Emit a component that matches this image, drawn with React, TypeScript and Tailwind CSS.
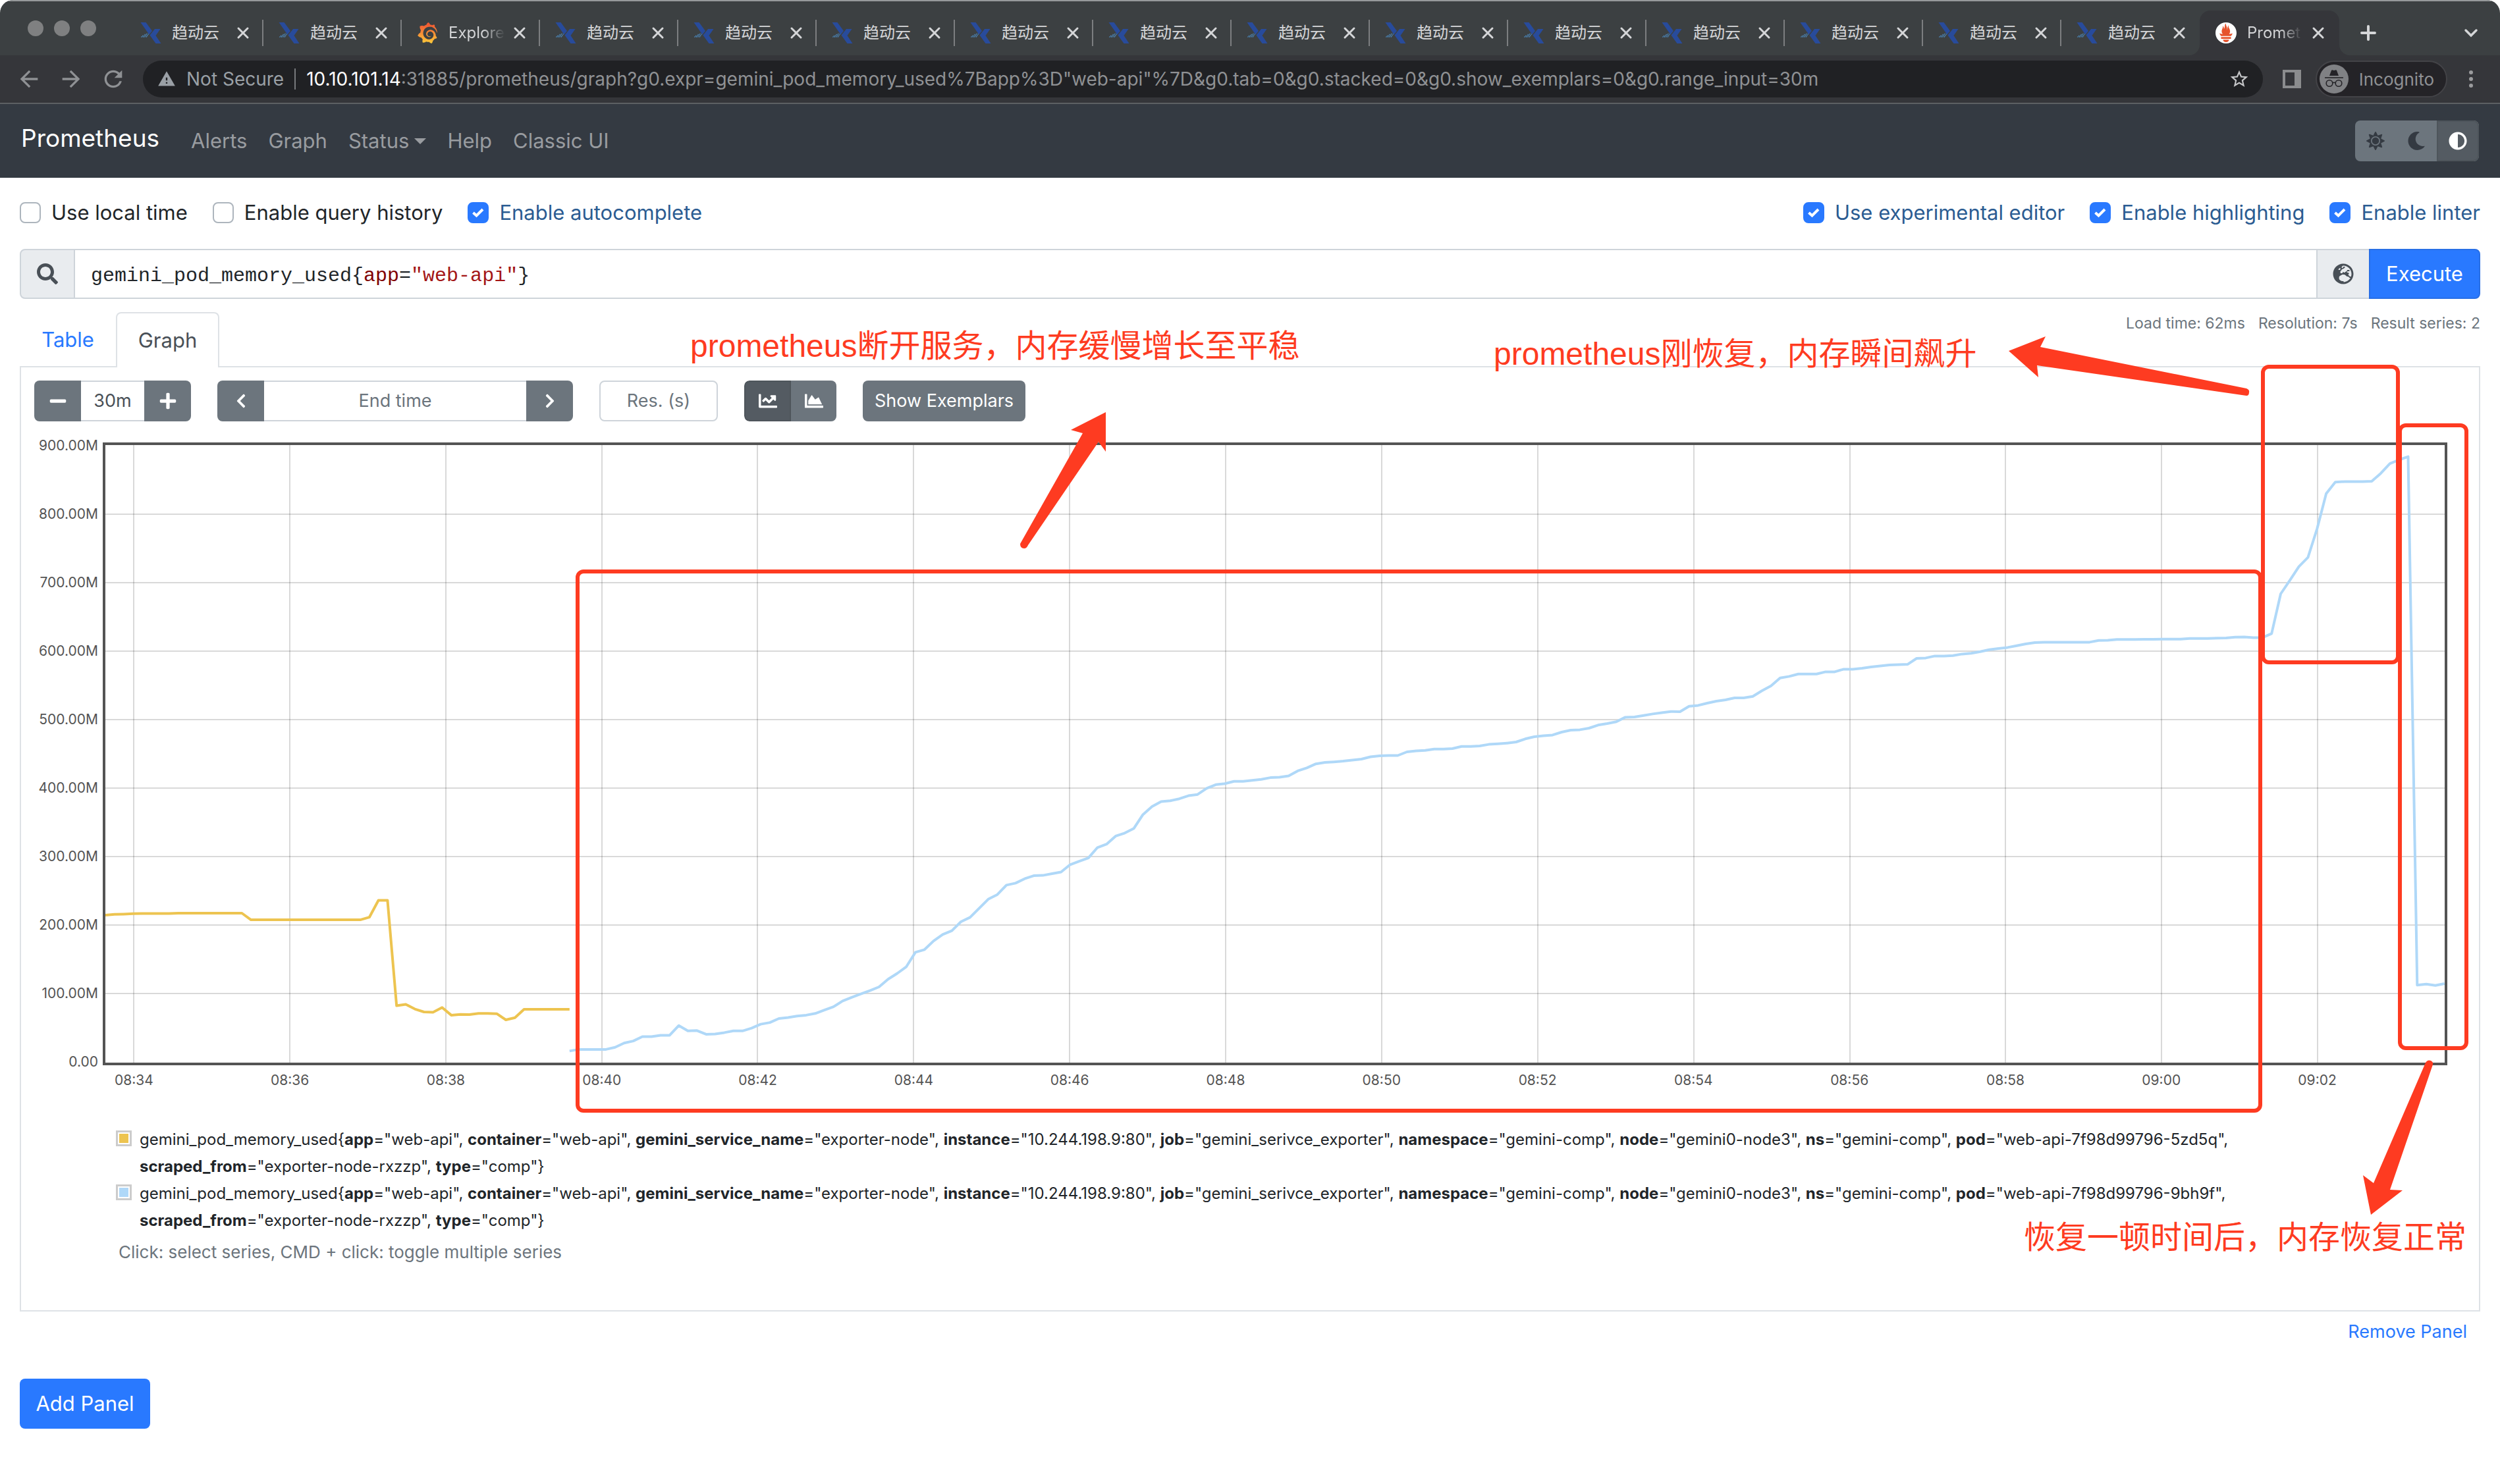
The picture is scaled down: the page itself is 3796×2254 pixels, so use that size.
import React from "react";
import {
  FaAdjust,
  FaChartArea,
  FaChartLine,
  FaChevronLeft,
  FaChevronRight,
  FaGlobeEurope,
  FaMinus,
  FaMoon,
  FaPlus,
  FaSearch,
  FaSun,
} from "react-icons/fa";
import { MdArrowBack, MdArrowForward, MdRefresh, MdStarBorder, MdWarning } from "react-icons/md";
import { SiGrafana, SiPrometheus } from "react-icons/si";

/* ---------- series data, in millions, one sample every 7 seconds ---------- */

const STEP = 13.82;
const PLOT_W = 3560;
const PLOT_H = 946;
const ZERO_Y = 941;

const rep = (value: number, times: number): number[] => Array.from({ length: times }, () => value);

const yellow: number[] = [
  214.5, 215.6, 216, 216.6, ...rep(216.9, 4), ...rep(217.3, 8), ...rep(207.6, 13), 211.3, 236.1, 236.1,
  82.1, 84.2, 77.3, 73.1, 72.6, 79.5, 68.4, 69.4, 69.2, 71, 71, 70.5, 61.5, 64.7, ...rep(76.8, 6),
];

const blue: number[] = [
  16, 18.4, 18.4, 18.4, 18.4, 21.4, 27.7, 30.7, 37, 37, 39, 39, 53.2, 45.4, 45.9, 40.5, 41, 42.9, 45.4, 45.4,
  49.3, 55.2, 57.6, 63.5, 65, 67, 68.4, 70.9, 75.8, 80.7, 89, 94.4, 99.3, 104.2, 109.6, 120.9, 129.3, 139.1,
  160.2, 164.1, 176.8, 186.2, 191.6, 204.8, 211.2, 224.4, 237.7, 244.5, 258.3, 261.2, 267.6, 272, 272.5, 275,
  277.4, 288.2, 293.1, 298, 313.2, 318.1, 329.9, 334.3, 341.2, 361.3, 373.1, 380.4, 381.4, 384.4, 388.8, 390.7,
  399.6, 405, 406.4, 409.9, 409.9, 411.3, 412.8, 415.3, 415.8, 417.7, 425.1, 429.5, 435.4, 437.4, 438.3, 439.3,
  440.8, 442.3, 445.7, 447.2, 447.7, 447.6, 452.9, 454.4, 455.1, 457, 457, 457.7, 460.9, 460.9, 461.5, 463.8,
  464.7, 465.7, 467.3, 471.8, 475, 476.3, 477.5, 481.7, 484.6, 485.2, 487.5, 492, 494.2, 496.8, 503.5, 503.8,
  506.1, 508.3, 510.2, 511.8, 511.5, 519.5, 520.8, 524, 526.9, 528.8, 531.7, 531.7, 533.9, 542, 549.3, 560.9,
  563.1, 566.6, 566.6, 566.6, 569.8, 569.8, 573.7, 573.7, 575, 576.9, 578.5, 579.8, 580.4, 580.7, 589.4, 590,
  592.9, 592.9, 593.6, 595.8, 596.8, 599.3, 602.2, 603.8, 605.4, 608, 610.6, 612.5, ...rep(613.1, 6), 615.7,
  616, ...rep(617, 3), 617.3, 617.3, ...rep(617.6, 3), ...rep(618.6, 3), 618.9, 619.2, 620.5, 620.8, 619.8,
  619.8, 625.6, 683.7, 703.2, 723.5, 736.9, 778.8, 830, 846.9, ...rep(847.6, 3), 848.2, 859.7, 873.9, 879.3,
  884, 112.3, 113.7, 111.7, 114.4,
];

const toPoints = (values: number[], start: number): string =>
  values.map((v, i) => `${(4 + STEP * (start + i)).toFixed(1)},${(ZERO_Y - v * 1.04).toFixed(1)}`).join(" ");

const yLabels = ["900.00M", "800.00M", "700.00M", "600.00M", "500.00M", "400.00M", "300.00M", "200.00M", "100.00M", "0.00"];
const xLabels = [
  "08:34", "08:36", "08:38", "08:40", "08:42", "08:44", "08:46", "08:48",
  "08:50", "08:52", "08:54", "08:56", "08:58", "09:00", "09:02",
];

/* ---------- browser chrome ---------- */

function CloudLogo() {
  return (
    <svg viewBox="0 0 32 32" className="size-8 shrink-0" aria-hidden="true">
      <polygon points="0.5,0 8.5,0 18,13 13.5,18.5" fill="#284b9b" />
      <polygon points="22,10 30.5,10 23.5,20 31.5,32 23.5,32 14.5,19.5" fill="#284b9b" />
      <g stroke="#4f93cf" strokeWidth="1.3" strokeDasharray="1.6 0.7">
        <path d="M1.5 22.5 L4 20" />
        <path d="M4 22.5 L7.5 18" />
        <path d="M6.5 22.5 L10.5 16.5" />
        <path d="M9 22.5 L12.5 17.5" />
      </g>
    </svg>
  );
}

function CloseIcon() {
  return (
    <svg viewBox="0 0 20 20" className="size-5" stroke="#d5d6d8" strokeWidth="3" strokeLinecap="round" aria-hidden="true">
      <path d="M3 3 L17 17 M17 3 L3 17" />
    </svg>
  );
}

function BrowserTab({ title, divider = true }: { title: string; divider?: boolean }) {
  const grafana = title === "Explore";
  return (
    <div className="flex h-[68px] w-[210px] min-w-0 items-center">
      <div className="flex min-w-0 flex-1 items-center pl-[23px]">
        {grafana ? <SiGrafana className="size-8 shrink-0" fill="url(#grafana-fill)" /> : <CloudLogo />}
        <span
          className={
            grafana
              ? "ml-4 w-[86px] overflow-hidden whitespace-nowrap bg-gradient-to-r from-[#d5d6d8] from-60% to-transparent bg-clip-text text-transparent"
              : "ml-4 w-[86px] overflow-hidden whitespace-nowrap"
          }
        >
          {title}
        </span>
        <button type="button" aria-label={`Close ${title}`} className="ml-3">
          <CloseIcon />
        </button>
      </div>
      <div className={divider ? "h-10 w-0.5 bg-[#7c7e80]" : "h-10 w-0.5"} />
    </div>
  );
}

const tabTitles = ["趋动云", "趋动云", "Explore", ...Array.from({ length: 12 }, () => "趋动云")];

function TabStrip() {
  return (
    <div className="flex h-[84px] items-end border-t-2 border-[#96999b] bg-[#3c4042] text-2xl text-[#d5d6d8]">
      <svg width="0" height="0" className="absolute" aria-hidden="true">
        <linearGradient id="grafana-fill" x1="0" y1="0" x2="0" y2="1">
          <stop offset="0.1" stopColor="#f05a33" />
          <stop offset="1" stopColor="#fbca3a" />
        </linearGradient>
      </svg>
      <div className="flex h-full w-[190px] shrink-0 items-center gap-4 pl-[42px]">
        <span className="size-6 rounded-full bg-[#7f8081]" />
        <span className="size-6 rounded-full bg-[#7f8081]" />
        <span className="size-6 rounded-full bg-[#7f8081]" />
      </div>
      {tabTitles.map((title, i) => (
        <BrowserTab key={i} title={title} divider={i < tabTitles.length - 1} />
      ))}
      <div className="relative flex h-[68px] w-[212px] min-w-0 items-center rounded-t-2xl bg-[#35363a] pl-6">
        <svg viewBox="0 0 16 16" className="absolute bottom-0 -left-4 size-4" aria-hidden="true">
          <path d="M16 0 V16 H0 A16 16 0 0 0 16 0Z" fill="#35363a" />
        </svg>
        <svg viewBox="0 0 16 16" className="absolute -right-4 bottom-0 size-4" aria-hidden="true">
          <path d="M0 0 V16 H16 A16 16 0 0 1 0 0Z" fill="#35363a" />
        </svg>
        <span className="flex size-8 shrink-0 items-center justify-center rounded-full bg-[radial-gradient(#e6522c_60%,transparent_62%)]">
          <SiPrometheus className="size-8 text-white" />
        </span>
        <span className="ml-4 w-[84px] whitespace-nowrap bg-gradient-to-r from-[#d5d6d8] from-60% to-transparent bg-clip-text text-transparent">
          Promet
        </span>
        <button type="button" aria-label="Close Prometheus" className="ml-3.5">
          <CloseIcon />
        </button>
      </div>
      <div className="flex h-[68px] flex-1 items-center justify-between pr-8 pl-8">
        <button type="button" aria-label="New tab">
          <svg viewBox="0 0 24 24" className="size-6" stroke="#d5d6d8" strokeWidth="4" strokeLinecap="round">
            <path d="M12 2 V22 M2 12 H22" />
          </svg>
        </button>
        <button type="button" aria-label="Search tabs">
          <svg viewBox="0 0 24 24" className="size-6" fill="none" stroke="#d5d6d8" strokeWidth="3.5" strokeLinecap="round">
            <path d="M4 8 L12 16 L20 8" />
          </svg>
        </button>
      </div>
    </div>
  );
}

function Toolbar() {
  return (
    <div className="flex h-[74px] items-center border-b-2 border-[#5d6063] bg-[#35363a] pl-6 text-[28px] text-[#8f9194]">
      <div className="flex w-[193px] shrink-0 items-center gap-6">
        <button type="button" aria-label="Back">
          <MdArrowBack className="size-10" />
        </button>
        <button type="button" aria-label="Forward">
          <MdArrowForward className="size-10" />
        </button>
        <button type="button" aria-label="Reload">
          <MdRefresh className="size-10" />
        </button>
      </div>
      <div className="flex h-14 min-w-0 flex-1 items-center rounded-full bg-[#202124] pr-5 pl-[22px]">
        <MdWarning className="size-7 shrink-0 text-[#9aa0a6]" />
        <span className="ml-4 whitespace-nowrap text-[#9aa0a6]">Not Secure</span>
        <span className="mx-4 h-8 w-0.5 shrink-0 bg-[#77797c]" />
        <div
          role="textbox"
          aria-label="Address"
          contentEditable
          suppressContentEditableWarning
          className="min-w-0 flex-1 overflow-hidden whitespace-nowrap"
        >
          <span className="text-white">10.10.101.14</span>
          :31885/prometheus/graph?g0.expr=gemini_pod_memory_used%7Bapp%3D"web-api"%7D&amp;g0.tab=0&amp;g0.stacked=0&amp;g0.show_exemplars=0&amp;g0.range_input=30m
        </div>
        <button type="button" aria-label="Bookmark this page">
          <MdStarBorder className="size-8 text-[#c6c7c9]" />
        </button>
      </div>
      <button type="button" aria-label="Side panel" className="ml-[30px]">
        <svg viewBox="0 0 28 28" className="size-7" aria-hidden="true">
          <path d="M0 0 H28 V28 H0Z M4 4 V24 H18 V4Z" fill="#8b8c8e" fillRule="evenodd" />
        </svg>
      </button>
      <button
        type="button"
        className="ml-[22px] flex h-14 items-center rounded-full border-2 border-[#434347] bg-[#242327] pr-[18px] pl-1 text-[26px]"
      >
        <svg viewBox="0 0 44 44" className="size-11" aria-hidden="true">
          <circle cx="22" cy="22" r="22" fill="#808184" />
          <path d="M15 17 L18 9 Q18.500 8 20 8.500 L22 9 L24 8.500 Q25.500 8 26 9 L29 17Z" fill="#242327" />
          <path d="M8 20 H36" stroke="#242327" strokeWidth="1.600" />
          <g fill="none" stroke="#242327" strokeWidth="1.600">
            <circle cx="15" cy="28.500" r="4.800" />
            <circle cx="29" cy="28.500" r="4.800" />
            <path d="M19.800 28 Q22 26.500 24.200 28" />
          </g>
        </svg>
        <span className="ml-4">Incognito</span>
      </button>
      <button type="button" aria-label="Menu" className="mr-7 ml-5">
        <svg viewBox="0 0 32 32" className="size-8" fill="#9a9b9d">
          <circle cx="16" cy="6" r="3" />
          <circle cx="16" cy="16" r="3" />
          <circle cx="16" cy="26" r="3" />
        </svg>
      </button>
    </div>
  );
}

/* ---------- application ---------- */

function Navbar() {
  return (
    <nav className="flex h-28 items-center justify-between bg-[#343a42] pr-8 pl-8 text-[31px]">
      <div className="flex items-center gap-8 text-[#999ca0]">
        <a href="#home" className="mr-4 pb-2 text-[37px] text-white">
          Prometheus
        </a>
        <a href="#alerts">Alerts</a>
        <a href="#graph">Graph</a>
        <button type="button" className="flex items-center gap-2">
          Status
          <svg viewBox="0 0 18 9" className="h-[9px] w-[18px]" fill="#999ca0" aria-hidden="true">
            <path d="M0 0 H18 L9 9Z" />
          </svg>
        </button>
        <a href="#help">Help</a>
        <a href="#classic">Classic UI</a>
      </div>
      <div className="flex h-[62px] overflow-hidden rounded-lg bg-[#6c757d] text-[28px] text-[#343a42]">
        <button type="button" aria-label="Light theme" className="flex w-[62px] items-center justify-center">
          <FaSun />
        </button>
        <button type="button" aria-label="Dark theme" className="flex w-[62px] items-center justify-center">
          <FaMoon />
        </button>
        <button
          type="button"
          aria-label="Browser theme"
          className="flex w-16 items-center justify-center rounded-r-lg border-2 border-[#4e555b] bg-[#545b62] text-white"
        >
          <FaAdjust />
        </button>
      </div>
    </nav>
  );
}

function Check({ id, label, checked = false }: { id: string; label: string; checked?: boolean }) {
  return (
    <div className="flex items-center gap-4">
      <span className="relative flex size-8">
        <input
          id={id}
          type="checkbox"
          defaultChecked={checked}
          className="peer size-8 appearance-none rounded-lg border-2 border-[#adb5bd] bg-white checked:border-[#2979ff] checked:bg-[#2979ff]"
        />
        <svg
          viewBox="0 0 32 32"
          className="pointer-events-none absolute inset-0 hidden size-8 peer-checked:block"
          fill="none"
          stroke="white"
          strokeWidth="4"
          aria-hidden="true"
        >
          <path d="M8.500 16 L13.500 20.500 L23 11" />
        </svg>
      </span>
      <label htmlFor={id} className={checked ? "text-[#2b5c92]" : "text-[#212529]"}>
        {label}
      </label>
    </div>
  );
}

function Options() {
  return (
    <div className="flex h-[42px] items-center justify-between text-[31px]">
      <div className="flex gap-[38px]">
        <Check id="local-time" label="Use local time" />
        <Check id="history" label="Enable query history" />
        <Check id="autocomplete" label="Enable autocomplete" checked />
      </div>
      <div className="flex gap-[38px]">
        <Check id="editor" label="Use experimental editor" checked />
        <Check id="highlighting" label="Enable highlighting" checked />
        <Check id="linter" label="Enable linter" checked />
      </div>
    </div>
  );
}

function QueryBar() {
  return (
    <div className="mt-[34px] flex h-[76px] text-[32px] text-[#495057]">
      <span className="flex w-[84px] items-center justify-center rounded-l-lg border-2 border-[#ced4da] bg-[#e9ecef]">
        <FaSearch />
      </span>
      <div
        role="textbox"
        aria-label="Expression"
        contentEditable
        suppressContentEditableWarning
        className="flex min-w-0 flex-1 items-center border-y-2 border-[#ced4da] pt-1.5 pl-6 font-['Liberation_Mono',monospace] text-[30px] text-[#212529]"
      >
        <span>
          {"gemini_pod_memory_used{"}
          <span className="text-[#800000]">app</span>=<span className="text-[#a31515]">"web-api"</span>
          {"}"}
        </span>
      </div>
      <button
        type="button"
        aria-label="Open metrics explorer"
        className="flex w-20 items-center justify-center border-2 border-r-0 border-[#ced4da] bg-[#e9ecef]"
      >
        <FaGlobeEurope />
      </button>
      <button type="button" className="w-[169px] rounded-r-lg border-2 border-[#286fe6] bg-[#2979ff] text-[31px] text-white">
        Execute
      </button>
    </div>
  );
}

const greyButton = "flex w-[71px] items-center justify-center bg-[#6c757d] text-white";

function Controls() {
  return (
    <div className="flex h-[62px] gap-10 text-[27px] text-[#6c757d]">
      <div className="flex overflow-hidden rounded-lg">
        <button type="button" aria-label="Decrease range" className={greyButton}>
          <FaMinus className="size-7" />
        </button>
        <input
          aria-label="Range"
          defaultValue="30m"
          className="w-24 border-y-2 border-[#ced4da] text-center text-[#495057] outline-none"
        />
        <button type="button" aria-label="Increase range" className={greyButton}>
          <FaPlus className="size-7" />
        </button>
      </div>
      <div className="flex overflow-hidden rounded-lg">
        <button type="button" aria-label="Earlier" className={greyButton}>
          <FaChevronLeft className="size-6" />
        </button>
        <input
          aria-label="End time"
          placeholder="End time"
          className="w-[398px] border-y-2 border-[#ced4da] text-center outline-none placeholder:text-[#6c757d]"
        />
        <button type="button" aria-label="Later" className={greyButton}>
          <FaChevronRight className="size-6" />
        </button>
      </div>
      <input
        aria-label="Resolution in seconds"
        placeholder="Res. (s)"
        className="w-[180px] rounded-lg border-2 border-[#ced4da] text-center outline-none placeholder:text-[#6c757d]"
      />
      <div className="flex overflow-hidden rounded-lg">
        <button
          type="button"
          aria-label="Line graph"
          className="flex w-[71px] items-center justify-center rounded-l-lg border-2 border-[#4e555b] bg-[#545b62] text-white"
        >
          <FaChartLine className="size-7" />
        </button>
        <button type="button" aria-label="Stacked graph" className="flex w-[69px] items-center justify-center bg-[#6c757d] text-white">
          <FaChartArea className="size-7" />
        </button>
      </div>
      <button type="button" className="rounded-lg bg-[#6c757d] px-[18px] text-white">
        Show Exemplars
      </button>
    </div>
  );
}

function Chart() {
  return (
    <div className="mt-8 mr-7 flex text-[21px] text-[#545454]">
      <div className="-mt-[47px] w-[104px] shrink-0 pr-[7px]">
        {yLabels.map((label) => (
          <div key={label} className="flex h-[104px] items-center justify-end">
            {label}
          </div>
        ))}
      </div>
      <div className="min-w-0 flex-1">
        <svg
          viewBox={`0 0 ${PLOT_W} ${PLOT_H}`}
          preserveAspectRatio="none"
          className="block h-[946px] w-full"
          fill="none"
          role="img"
          aria-label="Memory used over time"
        >
          <g stroke="#000000" strokeOpacity="0.15" strokeWidth="2">
            {xLabels.map((label, i) => (
              <path key={label} d={`M${Math.round(47 + i * 236.87)} 4 V942`} />
            ))}
            {yLabels.slice(1, 9).map((label, i) => (
              <path key={label} d={`M4 ${109 + i * 104} H3556`} />
            ))}
          </g>
          <g strokeWidth="4" strokeLinejoin="round">
            <polyline points={toPoints(yellow, 0)} stroke="#edc450" />
            <polyline points={toPoints(blue, 51)} stroke="#afd8f8" />
          </g>
          <rect x="2" y="2" width="3556" height="942" stroke="#545454" strokeWidth="4" />
        </svg>
        <div className="mr-[79px] -ml-[71px] flex h-[45px] items-center">
          {xLabels.map((label) => (
            <span key={label} className="flex-1 text-center">
              {label}
            </span>
          ))}
        </div>
      </div>
    </div>
  );
}

const labelsFor = (pod: string): [string, string][] => [
  ["app", "web-api"],
  ["container", "web-api"],
  ["gemini_service_name", "exporter-node"],
  ["instance", "10.244.198.9:80"],
  ["job", "gemini_serivce_exporter"],
  ["namespace", "gemini-comp"],
  ["node", "gemini0-node3"],
  ["ns", "gemini-comp"],
  ["pod", pod],
  ["scraped_from", "exporter-node-rxzzp"],
  ["type", "comp"],
];

function LegendRow({ pod, swatch }: { pod: string; swatch: string }) {
  const labels = labelsFor(pod);
  return (
    <div className="flex items-start gap-3">
      <span className="mt-[7px] flex size-6 shrink-0 border-[3px] border-[#cccccc] bg-white p-0.5">
        <span className={swatch} />
      </span>
      <p>
        {"gemini_pod_memory_used{"}
        {labels.map(([key, value], i) => (
          <React.Fragment key={key}>
            <span className="whitespace-nowrap">
              <b className="font-bold">{key}</b>="{value}"{i < labels.length - 1 ? "," : "}"}
            </span>{" "}
          </React.Fragment>
        ))}
      </p>
    </div>
  );
}

function Annotations() {
  const text =
    "absolute whitespace-nowrap font-['Liberation_Sans','Noto_Sans_CJK_SC',sans-serif] text-5xl leading-[60px] text-[#fe3b21]";
  return (
    <div className="pointer-events-none absolute inset-0">
      <div className="absolute top-[309px] left-[844px] h-[825px] w-[2561px] rounded-xl border-[6px] border-[#fe3b21]" />
      <div className="absolute -top-0.5 left-[3403px] h-[455px] w-[211px] rounded-xl border-[6px] border-[#fe3b21]" />
      <div className="absolute top-[87px] left-[3611px] h-[952px] w-[107px] rounded-xl border-[6px] border-[#fe3b21]" />
      <svg viewBox="0 0 3736 1436" className="absolute top-0 left-0 h-[1436px] w-[3736px] overflow-visible" fill="#fe3b21" aria-hidden="true">
        <path d="M1649 70 L1596 97 L1614 102 L1519 270 Q1519 277 1525 277 Q1529 277 1531 272 L1638 115 L1649 130Z" />
        <path d="M3020 -23 L3076 -45 L3068 -29 L3381 34 Q3386 36 3385 40 Q3385 45 3381 45 L3063 -1 L3065 17Z" />
        <path d="M3570 1289 L3558 1229 L3574 1241 L3653 1058 Q3656 1053 3661 1055 Q3665 1057 3664 1061 L3599 1251 L3618 1252Z" />
      </svg>
      <p className={`${text} -top-[60px] left-[1018px]`}>prometheus断开服务，内存缓慢增长至平稳</p>
      <p className={`${text} -top-12 left-[2238px]`}>prometheus刚恢复，内存瞬间飙升</p>
      <p className={`${text} top-[1294px] left-[3043px]`}>恢复一顿时间后，内存恢复正常</p>
    </div>
  );
}

function Panel() {
  return (
    <section>
      <div className="mt-5 flex h-[82px] items-start justify-between">
        <div role="tablist" className="flex h-[84px] text-[31px]">
          <button type="button" role="tab" aria-selected="false" className="w-[146px] pr-1 pl-1 text-[#2979ff]">
            Table
          </button>
          <button
            type="button"
            role="tab"
            aria-selected="true"
            className="relative z-10 w-[157px] rounded-t-lg border-2 border-b-0 border-[#dee2e6] bg-white text-[#495057]"
          >
            Graph
          </button>
        </div>
        <div className="flex gap-5 text-[23px] text-[#6c757d]">
          <span>Load time: 62ms</span>
          <span>Resolution: 7s</span>
          <span>Result series: 2</span>
        </div>
      </div>
      <div className="relative">
        <div className="border-2 border-[#dee2e6] px-5 pt-5 pb-[70px]">
          <Controls />
          <Chart />
          <div className="mt-[45px] mr-[150px] ml-[124px] text-2xl leading-[41px] text-[#212529]">
            <LegendRow pod="web-api-7f98d99796-5zd5q" swatch="flex-1 bg-[#edc450]" />
            <LegendRow pod="web-api-7f98d99796-9bh9f" swatch="flex-1 bg-[#afd8f8]" />
            <p className="mt-2.5 ml-1 text-[26px] leading-9 text-[#6c757d]">
              Click: select series, CMD + click: toggle multiple series
            </p>
          </div>
        </div>
        <Annotations />
      </div>
      <div className="flex h-[62px] items-center justify-end pr-5">
        <button type="button" className="text-[27px] text-[#2979ff]">
          Remove Panel
        </button>
      </div>
    </section>
  );
}

export default function App() {
  return (
    <div className="min-h-screen overflow-hidden rounded-t-[20px] bg-white font-['Inter','Noto_Sans_CJK_SC',sans-serif]">
      <header>
        <TabStrip />
        <Toolbar />
      </header>
      <Navbar />
      <main className="px-[30px] pt-8">
        <Options />
        <QueryBar />
        <Panel />
        <button type="button" className="mt-10 h-[76px] w-[198px] rounded-lg bg-[#2979ff] text-[31px] text-white">
          Add Panel
        </button>
      </main>
    </div>
  );
}
